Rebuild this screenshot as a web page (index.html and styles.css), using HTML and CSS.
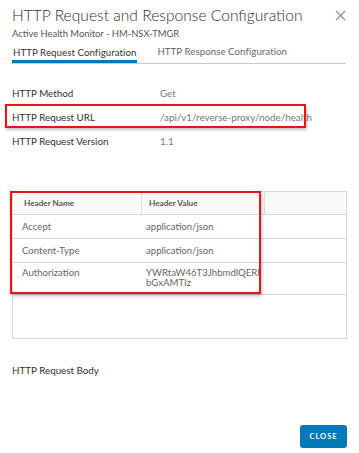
FILE: index.html
```html
<!DOCTYPE html>
<html lang="en">
<head>
    <meta charset="UTF-8">
    <meta name="viewport" content="width=device-width, initial-scale=1.0">
    <title>HTTP Request and Response Configuration</title>
    <link rel="stylesheet" href="styles.css">
</head>
<body>
    <div class="modal">
        <div class="modal-header">
            <h1>HTTP Request and Response Configuration</h1>
            <button class="close-x" aria-label="Close">
                <svg width="11" height="11" viewBox="0 0 11 11"><path d="M1 1L10 10M10 1L1 10" stroke="#8c8c8c" stroke-width="1.1" fill="none"/></svg>
            </button>
        </div>
        <div class="subtitle">Active Health Monitor - HM-NSX-TMGR</div>

        <div class="tabs">
            <div class="tab active">HTTP Request Configuration</div>
            <div class="tab">HTTP Response Configuration</div>
        </div>

        <div class="props">
            <div class="prop"><span class="label">HTTP Method</span><span class="value">Get</span></div>
            <div class="prop"><span class="label">HTTP Request URL</span><span class="value">/api/v1/reverse-proxy/node/health</span></div>
            <div class="prop"><span class="label">HTTP Request Version</span><span class="value">1.1</span></div>
        </div>

        <div class="grid">
            <div class="grid-row grid-head">
                <div class="cell">Header Name</div>
                <div class="cell">Header Value</div>
                <div class="cell"></div>
            </div>
            <div class="grid-row">
                <div class="cell">Accept</div>
                <div class="cell">application/json</div>
                <div class="cell"></div>
            </div>
            <div class="grid-row">
                <div class="cell">Content-Type</div>
                <div class="cell">application/json</div>
                <div class="cell"></div>
            </div>
            <div class="grid-row tall">
                <div class="cell">Authorization</div>
                <div class="cell">YWRtaW46T3JhbmdlQERlbGxAMTIz</div>
                <div class="cell"></div>
            </div>
        </div>

        <div class="body-label">HTTP Request Body</div>

        <div class="footer">
            <button class="btn">CLOSE</button>
        </div>

        <!-- annotation boxes -->
        <div class="mark mark-url"></div>
        <div class="mark mark-grid"></div>
    </div>
</body>
</html>
```

FILE: styles.css
```css
* {
    box-sizing: border-box;
}
body {
    margin: 0;
    background: #fff;
    font-family: "Lato", "Open Sans", sans-serif;
    color: #333;
}
.modal {
    position: relative;
    width: 359px;
    height: 453px;
    padding: 0 12px;
}
.modal-header {
    display: flex;
    justify-content: space-between;
    align-items: center;
    height: 28px;
    padding-top: 1px;
}
.modal-header h1 {
    margin: 0;
    font-size: 15.6px;
    font-weight: 300;
    color: #313131;
    letter-spacing: 0;
}
.close-x {
    border: 0;
    background: none;
    padding: 0;
    margin-right: 1px;
    margin-top: 2px;
    display: flex;
}
.subtitle {
    font-size: 9.4px;
    color: #565656;
    margin-top: 0;
    height: 12px;
}
.tabs {
    display: flex;
    gap: 19px;
    margin-top: 4px;
    border-bottom: 1px solid #ccc;
    margin-right: 1px;
}
.tab {
    font-size: 9.7px;
    color: #666;
    padding: 0 1px 5px 1px;
    height: 19px;
    display: flex;
    align-items: center;
    letter-spacing: 0.05px;
}
.tab.active {
    color: #333;
    border-bottom: 3px solid #0079b8;
    margin-bottom: -1px;
    padding-top: 4px;
}
.props {
    margin-top: 17px;
}
.prop {
    display: flex;
    height: 24px;
    align-items: center;
    font-size: 9.8px;
}
.label {
    width: 148px;
    color: #313131;
}
.value {
    color: #777;
}
.grid {
    margin-top: 38px;
    border: 1px solid #d7d7d7;
    height: 148px;
}
.grid-row {
    display: grid;
    grid-template-columns: 128px 123px 1fr;
    border-bottom: 1px solid #d7d7d7;
    height: 24px;
    font-size: 9.6px;
    color: #666;
}
.grid-row.tall {
    height: 32px;
}
.grid-row.tall .cell {
    align-items: flex-start;
    padding-top: 5px;
    line-height: 10px;
    word-break: break-all;
    padding-right: 2px;
}
.grid-head {
    background: #fafafa;
    height: 23px;
    font-size: 8.2px;
    font-weight: 700;
    color: #565656;
}
.grid-head .cell + .cell {
    border-left: 1px solid #ddd;
}
.cell {
    display: flex;
    align-items: center;
    padding-left: 9px;
}
.grid-head .cell:first-child {
    padding-left: 11px;
}
.grid-head .cell + .cell {
    padding-left: 7px;
}
.grid-row:not(.grid-head) .cell + .cell {
    padding-left: 5px;
}
.body-label {
    margin-top: 25px;
    font-size: 9.8px;
    color: #313131;
}
.footer {
    position: absolute;
    right: 12px;
    bottom: 5px;
}
.btn {
    background: #0079b8;
    border: 0;
    border-radius: 3px;
    width: 47px;
    height: 23px;
    color: #fff;
    font-family: "Lato", sans-serif;
    font-weight: 700;
    font-size: 7.5px;
    letter-spacing: 1px;
    padding: 0;
}
.mark {
    position: absolute;
    border: 2px solid #e8141c;
    box-shadow: 1px 2px 3px rgba(0, 0, 0, 0.25);
}
.mark-url {
    left: 5px;
    top: 104px;
    width: 301px;
    height: 24px;
}
.mark-grid {
    left: 10px;
    top: 191px;
    width: 251px;
    height: 103px;
}
```
